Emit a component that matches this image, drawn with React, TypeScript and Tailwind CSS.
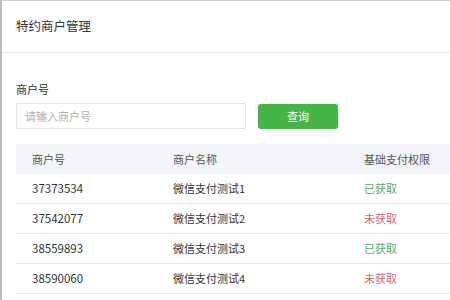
export default function App() {
  const rows = [
    { id: "37373534", name: "微信支付测试1", ok: true },
    { id: "37542077", name: "微信支付测试2", ok: false },
    { id: "38559893", name: "微信支付测试3", ok: true },
    { id: "38590060", name: "微信支付测试4", ok: false },
    { id: "38590061", name: "微信支付测试5", ok: true },
  ];

  return (
    <div
      className="w-[450px] h-[300px] overflow-hidden bg-white border-l-2 border-t border-l-[#bdbdbd] border-t-[#cfcfcf] text-[#353535]"
      style={{ fontFamily: '"Microsoft YaHei", "Noto Sans CJK SC", sans-serif' }}
    >
      {/* Header */}
      <div className="h-[52px] border-b border-[#e7e7eb] px-[14px] flex items-center">
        <h1 className="text-[12.5px] font-normal">特约商户管理</h1>
      </div>

      {/* Search */}
      <div className="px-[14px] pt-[28px]">
        <p className="text-[11px] leading-[16px]">商户号</p>
        <div className="flex items-center gap-[12px] mt-[6px]">
          <input
            className="w-[230px] h-[26px] border border-[#e7e7eb] px-[8px] text-[11px] outline-none placeholder:text-[#b2b2b2]"
            placeholder="请输入商户号"
          />
          <button className="w-[80px] h-[25px] rounded-[3px] bg-[#44b549] text-white text-[11px]">
            查询
          </button>
        </div>
      </div>

      {/* Table */}
      <div className="pl-[14px] mt-[15px]">
        <div className="w-[460px] text-[11px]">
          <div className="flex h-[30px] items-center bg-[#f4f5f9] text-[#555]">
            <div className="w-[141px] pl-[16px]">商户号</div>
            <div className="w-[191px] pl-[16px]">商户名称</div>
            <div className="pl-[16px]">基础支付权限</div>
          </div>
          {rows.map((r) => (
            <div key={r.id} className="flex h-[30px] items-center border-b border-[#e7e7eb]">
              <div className="w-[141px] pl-[16px] text-[11.5px]">{r.id}</div>
              <div className="w-[191px] pl-[16px]">{r.name}</div>
              <div className={`pl-[16px] ${r.ok ? "text-[#5cab5f]" : "text-[#d66a68]"}`}>
                {r.ok ? "已获取" : "未获取"}
              </div>
            </div>
          ))}
        </div>
      </div>
    </div>
  );
}
